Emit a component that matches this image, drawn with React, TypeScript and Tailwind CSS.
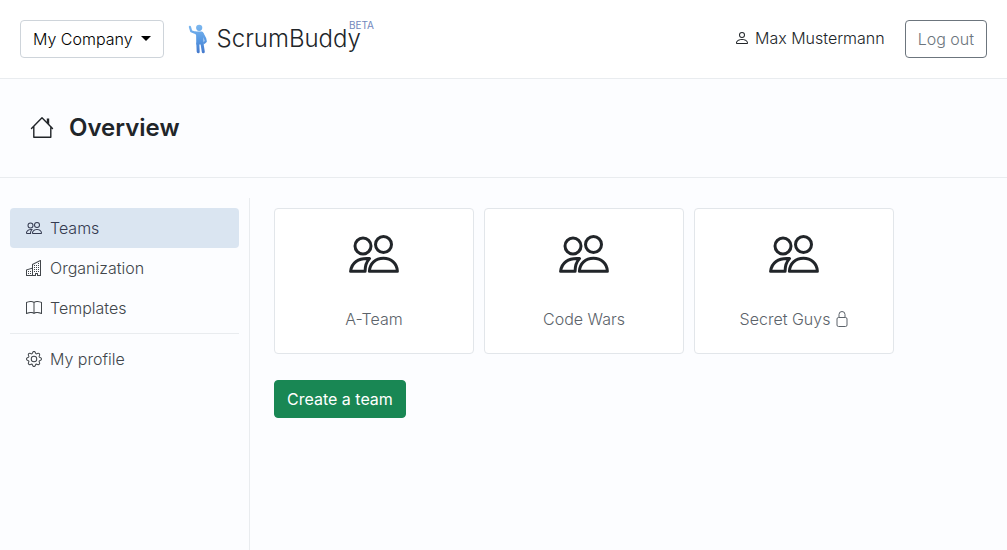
import type { IconType } from 'react-icons';
import { BsBook, BsBuildings, BsGear, BsPeople, BsPerson } from 'react-icons/bs';

interface NavItem {
  label: string;
  icon: IconType;
}

interface Team {
  name: string;
  locked: boolean;
}

const NAV_ITEMS: NavItem[] = [
  { label: 'Teams', icon: BsPeople },
  { label: 'Organization', icon: BsBuildings },
  { label: 'Templates', icon: BsBook },
];

const TEAMS: Team[] = [
  { name: 'A-Team', locked: false },
  { name: 'Code Wars', locked: false },
  { name: 'Secret Guys', locked: true },
];

function BuddyLogo() {
  return (
    <svg width="20" height="30" viewBox="0 0 20 30" aria-hidden="true">
      <defs>
        <linearGradient id="buddy" gradientUnits="userSpaceOnUse" x1="0" y1="0" x2="0" y2="30">
          <stop offset="0" stopColor="#7fbaf0" />
          <stop offset="0.55" stopColor="#5798e2" />
          <stop offset="1" stopColor="#4377cb" />
        </linearGradient>
      </defs>
      <circle cx="11.200" cy="3.800" r="3.100" fill="url(#buddy)" />
      <path fill="url(#buddy)" d="M6.500 7.600h7.300l1.700 2 .2 10.900H8.300l-.2-9.200Z" />
      <g fill="none" stroke="url(#buddy)" strokeLinecap="round" strokeLinejoin="round">
        <path strokeWidth="2.200" d="M1.900 2.900 3.200 7.200l5 1.900" />
        <path strokeWidth="2.300" d="m14.200 9 2.900 5.600.600 2.900-1.400 1.200" />
        <path strokeWidth="3" d="m9.800 19.500.4 8.300M14 19.500l1.300 8.300" />
      </g>
    </svg>
  );
}

function HouseIcon() {
  return (
    <svg width="24" height="24" viewBox="0 0 24 24" fill="none" stroke="currentColor" aria-hidden="true">
      <path strokeWidth="1.400" strokeLinecap="round" strokeLinejoin="round" d="M1.500 12.500 12 1.700l10.500 10.800M3.800 10.500v10.700h17V10.500" />
      <path fill="currentColor" stroke="none" d="M16.800 2.500h2.400v6.200l-2.400-2.400Z" />
    </svg>
  );
}

function TeamIcon() {
  return (
    <svg width="50" height="50" viewBox="0 0 50 50" fill="none" stroke="currentColor" strokeWidth="3" strokeLinejoin="round" aria-hidden="true">
      <circle cx="14" cy="17" r="8" />
      <circle cx="34.500" cy="15.500" r="8" />
      <path d="M20.500 29.500C9 28.500 2.500 34 1.600 42.300h14.500c0-5.300 1.300-9.500 4.400-12.800Z" />
      <path d="M20.400 42.300c.3-8 6.200-13 14-13s13.700 5 14 13Z" />
    </svg>
  );
}

function LockIcon() {
  return (
    <svg width="12" height="18" viewBox="0 0 12 18" fill="none" stroke="currentColor" aria-label="Private team">
      <rect x="1" y="7.500" width="10" height="9" rx="1.500" />
      <path d="M3 7.500V4.500a3 3 0 0 1 6 0v3" />
    </svg>
  );
}

function Header() {
  return (
    <header className="flex items-center justify-between border-b border-[#e9ecef] bg-white px-5 py-5">
      <div className="flex items-center gap-6">
        <button className="flex items-center gap-2 rounded border border-[#ced4da] bg-white px-3 py-1.5 text-black">
          My Company
          <span className="mb-0.5 border-x-5 border-t-5 border-x-transparent border-t-black" />
        </button>
        <a href="#" className="flex items-center gap-[9px]">
          <BuddyLogo />
          <span className="flex items-start text-2xl leading-9">
            ScrumBuddy
            <sup className="top-0 -mt-1 -ml-3 text-[10px] leading-4 font-normal text-[#7187bd]">BETA</sup>
          </span>
        </a>
      </div>
      <div className="flex items-center gap-5">
        <a href="#" className="flex items-center gap-[5px] pb-0.5">
          <BsPerson size={16} />
          Max Mustermann
        </a>
        <button className="rounded border border-[#6c757d] px-3 py-1.5 text-[#6c757d]">Log out</button>
      </div>
    </header>
  );
}

function Sidebar() {
  return (
    <nav className="w-[250px] shrink-0 border-r border-[#e9ecef] p-2.5 text-[#41464b]">
      {NAV_ITEMS.map(({ label, icon: Icon }, i) => (
        <a
          key={label}
          href="#"
          className={`flex items-center gap-2 rounded px-4 py-2 ${i === 0 ? 'bg-[#dae5f1] text-[#343a50]' : ''}`}
        >
          <Icon size={16} />
          {label}
        </a>
      ))}
      <hr className="my-[5px] border-[#e9ecef]" />
      <a href="#" className="flex items-center gap-2 rounded px-4 py-2">
        <BsGear size={16} />
        My profile
      </a>
    </nav>
  );
}

export default function App() {
  return (
    <div className="flex min-h-screen flex-col bg-[#fcfdff] font-['Inter',sans-serif] text-base font-light text-[#212529]">
      <Header />

      {/* Page title */}
      <div className="flex items-center gap-[15px] border-b border-[#e9ecef] px-[30px] py-8">
        <HouseIcon />
        <h1 className="text-2xl leading-[34px] font-semibold">Overview</h1>
      </div>

      <div className="flex flex-1 pt-5">
        <Sidebar />

        {/* Team cards */}
        <main className="flex-1 px-6 pt-2.5">
          <div className="flex flex-wrap gap-2.5">
            {TEAMS.map((team) => (
              <a
                key={team.name}
                href="#"
                className="flex w-[200px] flex-col items-center gap-7 rounded border border-[#e2e6ea] bg-white px-4 pt-5 pb-[22px]"
              >
                <TeamIcon />
                <span className="flex items-center gap-1.5 text-[#5c636a]">
                  {team.name}
                  {team.locked && <LockIcon />}
                </span>
              </a>
            ))}
          </div>
          <button className="mt-[26px] rounded border border-[#198754] bg-[#198754] px-3 py-1.5 font-normal text-white">
            Create a team
          </button>
        </main>
      </div>
    </div>
  );
}
